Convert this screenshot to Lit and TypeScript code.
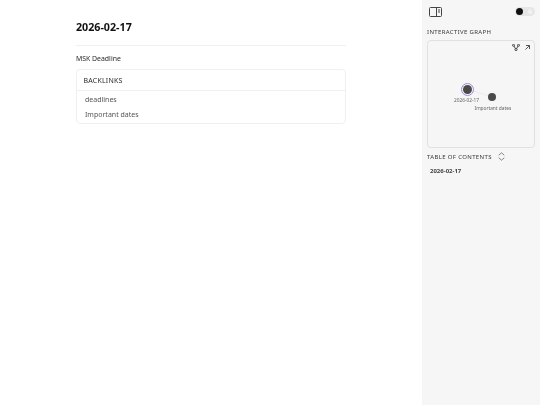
import { LitElement, html, css } from "lit";
import { customElement } from "lit/decorators.js";

@customElement("app-root")
export class AppRoot extends LitElement {
  static styles = css`
    :host { display: flex; width: 540px; height: 405px; overflow: hidden; background: #fff; font-family: "Noto Sans", sans-serif; color: #333; filter: blur(.3px); }
    .main { width: 422px; box-sizing: border-box; padding: 19px 76px 0; }
    .side { width: 118px; background: #f6f6f6; box-sizing: border-box; padding: 5px 5px 0; display: flex; flex-direction: column; }
    h1 { margin: 0; font-size: 10.7px; line-height: 16px; font-weight: 700; color: #111; }
    hr { border: 0; border-top: 1px solid #f0f0f0; margin: 10px 0 0; }
    p { margin: 8px 0 0; font-size: 6.9px; line-height: 9px; color: #2a2a2a; }
    .box { margin-top: 6px; border: 1px solid #f0f0f0; border-radius: 4px; height: 55px; box-sizing: border-box; }
    .bh { height: 21px; border-bottom: 1px solid #f0f0f0; box-sizing: border-box; padding: 0 6.5px; font-size: 7px; line-height: 21px; letter-spacing: .2px; color: #2a2a2a; }
    .bl { padding: 1px 8px 0; font-size: 7px; line-height: 15px; color: #555; }
    .top { display: flex; justify-content: space-between; align-items: center; height: 12px; margin-left: 1.5px; }
    .panel { margin-top: 1px; }
    .label { font-size: 6px; line-height: 8px; letter-spacing: .35px; color: #3a3a3a; }
    .graph { position: relative; margin-top: 4px; width: 108px; height: 108px; box-sizing: border-box; border: 1px solid #e0e0e0; border-radius: 4px; }
    .glabel { margin-top: 11px; }
    .toch { display: flex; align-items: center; gap: 6px; margin-top: 4px; }
    .tocitem { font-size: 6px; font-weight: 700; color: #444; margin: 5.5px 0 0 3px; line-height: 8px; }
    svg { display: block; }
    .tools { position: absolute; top: 3px; right: 4px; display: flex; gap: 5px; align-items: center; }
    .lines { position: absolute; left: 0; top: 0; }
    .dot { position: absolute; border-radius: 50%; background: #4a4a4a; }
    .ring { position: absolute; width: 11px; height: 11px; border: 1px solid #a08cd6; border-radius: 50%; box-sizing: content-box; }
    .n1 { left: 35px; top: 44px; width: 9px; height: 9px; }
    .n2 { left: 60px; top: 52px; width: 8px; height: 8px; }
    .r1 { left: 33px; top: 42px; }
    .nl { position: absolute; font-size: 4.8px; line-height: 6px; color: #666; white-space: nowrap; }
    .l1 { left: 26px; top: 56px; }
    .l2 { left: 46.5px; top: 64px; }
    .tg { width: 20px; height: 9px; border-radius: 4.5px; background: #e6e6e6; position: relative; }
    .tg i { position: absolute; left: 1px; top: 1px; width: 7px; height: 7px; border-radius: 50%; background: #111; }
    .tg svg { position: absolute; right: 2px; top: 2px; }
  `;
  render() {
    return html`
      <div class="main">
        <h1>2026-02-17</h1>
        <hr />
        <p>MSK Deadline</p>
        <div class="box">
          <div class="bh">BACKLINKS</div>
          <div class="bl">deadlines<br />Important dates</div>
        </div>
      </div>
      <div class="side">
        <div class="top">
          <svg class="panel" width="13" height="10" viewBox="0 0 13 10" fill="none" stroke="#444" stroke-width="1"><rect x=".5" y=".5" width="12" height="9" rx="1"/><path d="M7.5 .5v9M9 3h2M9 5h2"/></svg>
          <div class="tg"><i></i><svg width="5" height="5" viewBox="0 0 5 5" fill="#f2f2f2"><path d="M3 .2A2.4 2.4 0 1 0 4.8 3 2 2 0 0 1 3 .2z"/></svg></div>
        </div>
        <div class="label glabel">INTERACTIVE GRAPH</div>
        <div class="graph">
          <div class="tools">
            <svg width="8" height="7" viewBox="0 0 8 7" fill="none" stroke="#444" stroke-width="1"><circle cx="1.5" cy="1.3" r="1"/><circle cx="6.5" cy="1.3" r="1"/><circle cx="4" cy="5.5" r="1.1"/><path d="M2 2.1L3.4 4.6M6 2.1L4.6 4.6"/></svg>
            <svg width="5" height="5" viewBox="0 0 5 5" fill="none" stroke="#444" stroke-width=".9"><path d="M.5 4.5L4.5 .5M1 .5h3.5V4"/></svg>
          </div>
          <svg class="lines" width="106" height="106"><line x1="39" y1="48" x2="64" y2="56" stroke="#e4e4e4" stroke-width=".6"/></svg>
          <div class="ring r1"></div>
          <div class="dot n1"></div>
          <div class="dot n2"></div>
          <div class="nl l1">2026-02-17</div>
          <div class="nl l2">Important dates</div>
        </div>
        <div class="toch">
          <div class="label">TABLE OF CONTENTS</div>
          <svg width="7" height="9" viewBox="0 0 7 9" fill="none" stroke="#666" stroke-width=".8" stroke-linecap="round" stroke-linejoin="round"><path d="M1 3L3.5 .8 6 3M1 6L3.5 8.2 6 6"/></svg>
        </div>
        <div class="tocitem">2026-02-17</div>
      </div>
    `;
  }
}
